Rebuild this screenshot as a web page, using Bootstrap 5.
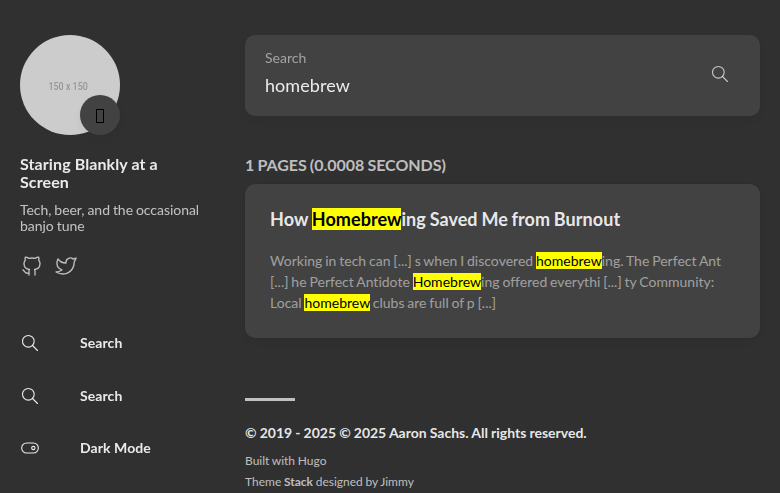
<!DOCTYPE html>
<html lang="en">
<head>
<meta charset="utf-8">
<meta name="viewport" content="width=device-width, initial-scale=1">
<title>Search - Staring Blankly at a Screen</title>
<link href="https://cdn.jsdelivr.net/npm/bootstrap@5.3.0/dist/css/bootstrap.min.css" rel="stylesheet">
<style>
body{background:#303030;color:rgba(255,255,255,.7);font-family:Lato,"Liberation Sans",sans-serif;font-size:14px;line-height:1.15;overflow:hidden;font-variant-ligatures:none}
a{color:inherit;text-decoration:none}
.page{height:493px;padding:35px 20px 0;gap:40px}
.side{width:185px;will-change:transform}
.avatar{width:100px;height:100px;margin-bottom:20px}
.avatar-pic{width:100px;height:100px;background:#ccc;color:#969696;font:500 10.5px "Roboto",sans-serif;padding-top:2px;padding-right:3px}
.avatar-pic span{transform:scaleX(.85)}
.avatar-emoji{width:40px;height:40px;background:#424242;right:0;bottom:0;box-shadow:0 4px 8px rgba(0,0,0,.04),0 0 2px rgba(0,0,0,.06),0 0 1px rgba(0,0,0,.04)}
.avatar-emoji i{width:8px;height:14px;border:1px solid #000;margin-top:2px}
.site-name{font-size:16px;font-weight:700;line-height:18px;color:rgba(255,255,255,.9);margin:0 0 11px;letter-spacing:.1px}
.site-desc{font-size:14px;font-weight:400;line-height:16px;margin:0 0 20px;word-spacing:-.6px;letter-spacing:-.04px}
.social{gap:10px;margin-bottom:53px}
.social svg{width:24px;height:24px}
svg{fill:none;stroke:currentColor;stroke-width:1.33;stroke-linecap:round;stroke-linejoin:round}
.menu-item{gap:40px;font-weight:700;color:rgba(255,255,255,.9);height:24px;margin-bottom:29px;letter-spacing:.08px}
.menu-item:nth-child(2){margin-bottom:28px}
.menu-item svg,.search-go svg{width:20px;height:20px;stroke-width:1.33}
.panel{background:#424242;border-radius:10px;box-shadow:0 4px 8px rgba(0,0,0,.04),0 0 2px rgba(0,0,0,.06),0 0 1px rgba(0,0,0,.04)}
.search-box{height:81px;will-change:transform}
.search-box label{left:20px;top:14px;font-size:14px;line-height:17px;color:rgba(255,255,255,.5)}
.search-box input{width:100%;height:81px;background:none;border:0;outline:0;padding:39px 20px 21px;font-size:18px;line-height:21px;color:rgba(255,255,255,.9);letter-spacing:.06px}
.search-go{width:80px;color:rgba(255,255,255,.7);background:none;border:0;padding-bottom:5px}
.count{font-size:16px;font-weight:700;line-height:19px;margin:39px 0 10px;word-spacing:-.7px;letter-spacing:-.03px}
.hit{height:154px;padding:25px}
.hit h2{font-size:18px;font-weight:700;line-height:20px;margin:0 0 21px;color:rgba(255,255,255,.9);word-spacing:-.7px;letter-spacing:.06px}
.hit p{font-size:14px;line-height:21px;color:rgba(255,255,255,.5);margin:0;word-spacing:-.75px;letter-spacing:.01px}
.hit mark{background:#ff0;color:#000;padding:0}
.foot::before{content:"";display:block;width:50px;height:3px;background:#c1c1c1;margin:60px 0 24px}
.copy{font-weight:700;line-height:16px;color:rgba(255,255,255,.9);margin-bottom:9px;word-spacing:-.3px}
.power{font-size:12px;line-height:21px;word-spacing:-.4px}
</style>
<script src="https://cdn.jsdelivr.net/npm/bootstrap@5.3.0/dist/js/bootstrap.bundle.min.js"></script>
</head>
<body>
<div class="page d-flex">
<aside class="side flex-shrink-0">
  <div class="avatar position-relative">
    <div class="avatar-pic rounded-circle d-flex align-items-center justify-content-center"><span>150 x 150</span></div>
    <span class="avatar-emoji rounded-circle position-absolute d-flex align-items-center justify-content-center"><i></i></span>
  </div>
  <h1 class="site-name">Staring Blankly at a Screen</h1>
  <h2 class="site-desc">Tech, beer, and the occasional banjo tune</h2>
  <div class="social d-flex">
    <a href="#" aria-label="GitHub"><svg class="d-block" viewBox="0 0 24 24"><path d="M9 19c-4.3 1.4 -4.3 -2.5 -6 -3m12 5v-3.5c0 -1 .1 -1.4 -.5 -2c2.8 -.3 5.500 -1.400 5.500 -6a4.600 4.600 0 0 0 -1.300 -3.200a4.200 4.200 0 0 0 -.1 -3.200s-1.100 -.3 -3.500 1.300a12.300 12.300 0 0 0 -6.200 0c-2.400 -1.600 -3.500 -1.300 -3.500 -1.300a4.200 4.200 0 0 0 -.1 3.200a4.600 4.600 0 0 0 -1.300 3.200c0 4.600 2.700 5.700 5.500 6c-.6 .6 -.6 1.200 -.5 2v3.500"/></svg></a>
    <a href="#" aria-label="Twitter"><svg class="d-block" viewBox="0 0 24 24"><path d="M22 4.010c-1 .49 -1.980 .689 -3 .99c-1.121 -1.265 -2.783 -1.335 -4.380 -.737s-2.643 2.060 -2.620 3.737v1c-3.245 .083 -6.135 -1.395 -8 -4c0 0 -4.182 7.433 4 11c-1.872 1.247 -3.739 2.088 -6 2c3.308 1.803 6.913 2.423 10.034 1.517c3.580 -1.040 6.522 -3.723 7.651 -7.742a13.840 13.840 0 0 0 .497 -3.753c0 -.249 1.510 -2.772 1.818 -4.013z"/></svg></a>
  </div>
  <nav class="d-flex flex-column">
    <a href="#" class="menu-item d-flex align-items-center"><svg viewBox="0 0 24 24"><circle cx="10" cy="10" r="7"/><path d="M21 21l-6 -6"/></svg><span>Search</span></a>
    <a href="#" class="menu-item d-flex align-items-center"><svg viewBox="0 0 24 24"><circle cx="10" cy="10" r="7"/><path d="M21 21l-6 -6"/></svg><span>Search</span></a>
    <a href="#" class="menu-item d-flex align-items-center"><svg viewBox="0 0 24 24"><circle cx="16" cy="12" r="2"/><rect x="2" y="6" width="20" height="12" rx="6"/></svg><span>Dark Mode</span></a>
  </nav>
</aside>
<main class="flex-grow-1">
  <form class="search-box panel position-relative d-flex">
    <label class="position-absolute" for="keyword">Search</label>
    <input id="keyword" type="text" value="homebrew">
    <button type="button" class="search-go flex-shrink-0 d-flex align-items-center justify-content-center" aria-label="Search"><svg viewBox="0 0 24 24"><circle cx="10" cy="10" r="7"/><path d="M21 21l-6 -6"/></svg></button>
  </form>
  <h3 class="count">1 PAGES (0.0008 SECONDS)</h3>
  <article class="hit panel">
    <h2>How <mark>Homebrew</mark>ing Saved Me from Burnout</h2>
    <p>Working in tech can [...] s when I discovered <mark>homebrew</mark>ing. The Perfect Ant [...] he Perfect Antidote <mark>Homebrew</mark>ing offered everythi [...] ty Community: Local <mark>homebrew</mark> clubs are full of p [...]</p>
  </article>
  <footer class="foot">
    <div class="copy">© 2019 - 2025 © 2025 Aaron Sachs. All rights reserved.</div>
    <div class="power">Built with Hugo<br>Theme <b>Stack</b> designed by Jimmy</div>
  </footer>
</main>
</div>
</body>
</html>
